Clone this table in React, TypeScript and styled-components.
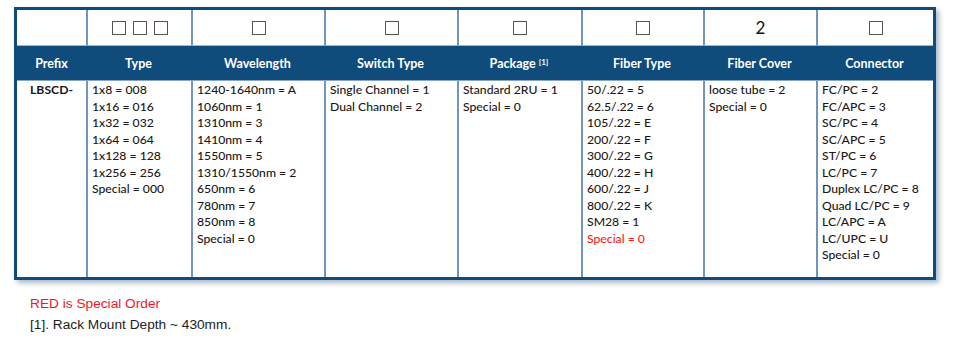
import React from 'react';
import styled, { createGlobalStyle } from 'styled-components';

const GlobalStyle = createGlobalStyle`
  body {
    margin: 0;
    background: #ffffff;
  }
`;

const Page = styled.div`
  width: 960px;
  height: 339px;
  padding: 7px 0 0 14px;
  box-sizing: border-box;
  background: #ffffff;
  overflow: hidden;
`;

const Table = styled.div`
  width: 922px;
  display: grid;
  grid-template-columns: 69px 105px 133px 133px 124px 122px 113px 117px;
  grid-template-rows: 36px 35px 196px;
  border: 3px solid #0f4c7b;
  box-sizing: border-box;
  box-shadow: 3px 3px 5px rgba(40, 80, 120, 0.4);
  font-family: Lato, 'Noto Sans', sans-serif;
`;

const CodeCell = styled.div<{ $first?: boolean }>`
  display: flex;
  align-items: center;
  justify-content: center;
  gap: 7px;
  border-left: ${({ $first }) => ($first ? 'none' : '2px solid #7296bb')};
  border-bottom: 1px solid #9fb8d0;
  color: #111111;
  font-size: 17px;
`;

const Box = styled.span`
  width: 14px;
  height: 14px;
  box-sizing: border-box;
  border: 1px solid #5c524d;
`;

const HeadCell = styled.div`
  display: flex;
  align-items: center;
  justify-content: center;
  padding-top: 1px;
  background: #0f4c7b;
  color: #ffffff;
  font-size: 12.5px;
  font-weight: 700;
  border-bottom: 1px solid #8aa6c4;
  sup {
    font-size: 8px;
    margin-left: 3px;
    position: relative;
    top: -2px;
  }
`;

const BodyCell = styled.div<{ $first?: boolean }>`
  border-left: ${({ $first }) => ($first ? 'none' : '2px solid #7296bb')};
  padding: 1px 0 0 ${({ $first }) => ($first ? '0' : '4px')};
  text-align: ${({ $first }) => ($first ? 'center' : 'left')};
  font-weight: ${({ $first }) => ($first ? 700 : 500)};
  color: #1a1717;
  font-size: 12.2px;
  line-height: 16.5px;
`;

const Line = styled.div<{ $red?: boolean }>`
  white-space: nowrap;
  color: ${({ $red }) => ($red ? '#ff1a1a' : 'inherit')};
`;

const Notes = styled.div`
  padding: 13px 0 0 16px;
  font-family: 'Liberation Sans', Arial, sans-serif;
  font-size: 13.7px;
  line-height: 21px;
  color: #1c1c1c;
`;

const RedNote = styled.div`
  color: #f4161f;
`;

type Column = {
  code: number | string;
  title: string;
  sup?: string;
  items: string[];
  red?: string[];
};

const columns: Column[] = [
  { code: 0, title: 'Prefix', items: ['LBSCD-'] },
  {
    code: 3,
    title: 'Type',
    items: ['1x8 = 008', '1x16 = 016', '1x32 = 032', '1x64 = 064', '1x128 = 128', '1x256 = 256', 'Special = 000'],
  },
  {
    code: 1,
    title: 'Wavelength',
    items: [
      '1240-1640nm = A',
      '1060nm = 1',
      '1310nm = 3',
      '1410nm = 4',
      '1550nm = 5',
      '1310/1550nm = 2',
      '650nm = 6',
      '780nm = 7',
      '850nm = 8',
      'Special = 0',
    ],
  },
  { code: 1, title: 'Switch Type', items: ['Single Channel = 1', 'Dual Channel = 2'] },
  { code: 1, title: 'Package', sup: '[1]', items: ['Standard 2RU = 1', 'Special = 0'] },
  {
    code: 1,
    title: 'Fiber Type',
    items: ['50/.22 = 5', '62.5/.22 = 6', '105/.22 = E', '200/.22 = F', '300/.22 = G', '400/.22 = H', '600/.22 = J', '800/.22 = K', 'SM28 = 1'],
    red: ['Special = 0'],
  },
  { code: '2', title: 'Fiber Cover', items: ['loose tube = 2', 'Special = 0'] },
  {
    code: 1,
    title: 'Connector',
    items: [
      'FC/PC = 2',
      'FC/APC = 3',
      'SC/PC = 4',
      'SC/APC = 5',
      'ST/PC = 6',
      'LC/PC = 7',
      'Duplex LC/PC = 8',
      'Quad LC/PC = 9',
      'LC/APC = A',
      'LC/UPC = U',
      'Special = 0',
    ],
  },
];

const App = () => {
  return (
    <Page>
      <GlobalStyle />
      <Table>
        {columns.map((col, i) => (
          <CodeCell key={`c${i}`} $first={i === 0}>
            {typeof col.code === 'string'
              ? col.code
              : [...Array(col.code)].map((_, j) => <Box key={j} />)}
          </CodeCell>
        ))}
        {columns.map((col, i) => (
          <HeadCell key={`h${i}`}>
            {col.title}
            {col.sup && <sup>{col.sup}</sup>}
          </HeadCell>
        ))}
        {columns.map((col, i) => (
          <BodyCell key={`b${i}`} $first={i === 0}>
            {col.items.map((item) => (
              <Line key={item}>{item}</Line>
            ))}
            {col.red?.map((item) => (
              <Line key={item} $red>
                {item}
              </Line>
            ))}
          </BodyCell>
        ))}
      </Table>
      <Notes>
        <RedNote>RED is Special Order</RedNote>
        <div>[1]. Rack Mount Depth ~ 430mm.</div>
      </Notes>
    </Page>
  );
};

export default App;
